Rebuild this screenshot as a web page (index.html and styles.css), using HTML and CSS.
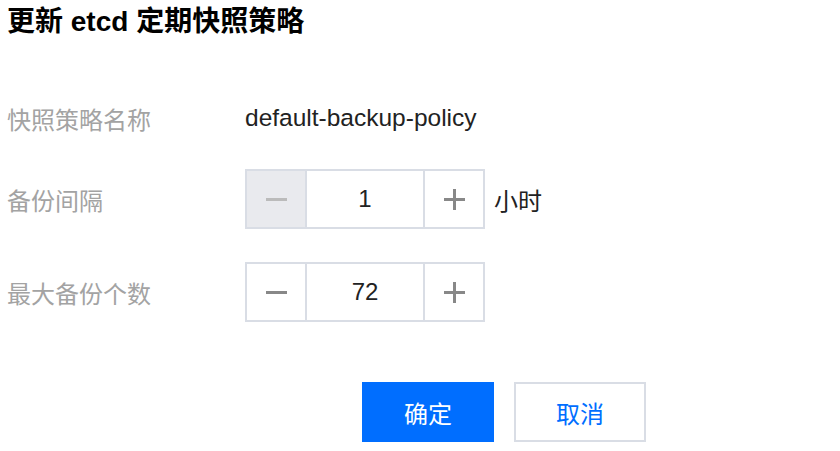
FILE: index.html
```html
<!DOCTYPE html>
<html lang="zh-CN">
<head>
    <meta charset="UTF-8">
    <meta name="viewport" content="width=device-width, initial-scale=1.0">
    <title>更新 etcd 定期快照策略</title>
    <link rel="stylesheet" href="styles.css">
</head>
<body>
    <div class="dialog">
        <h2 class="dialog-title">更新 etcd 定期快照策略</h2>

        <div class="form">
            <!-- 策略名称 -->
            <div class="form-row row-name">
                <label class="form-label">快照策略名称</label>
                <div class="form-value">default-backup-policy</div>
            </div>

            <!-- 备份间隔 -->
            <div class="form-row row-interval">
                <label class="form-label">备份间隔</label>
                <div class="stepper">
                    <button class="step-btn disabled" type="button"><span class="icon-minus"></span></button>
                    <input class="step-input" type="text" value="1">
                    <button class="step-btn" type="button"><span class="icon-plus"></span></button>
                </div>
                <span class="unit">小时</span>
            </div>

            <!-- 最大备份个数 -->
            <div class="form-row row-count">
                <label class="form-label">最大备份个数</label>
                <div class="stepper">
                    <button class="step-btn" type="button"><span class="icon-minus"></span></button>
                    <input class="step-input" type="text" value="72">
                    <button class="step-btn" type="button"><span class="icon-plus"></span></button>
                </div>
            </div>
        </div>

        <div class="dialog-footer">
            <button class="btn btn-primary" type="button">确定</button>
            <button class="btn btn-default" type="button">取消</button>
        </div>
    </div>
</body>
</html>
```

FILE: styles.css
```css
body {
    margin: 0;
    padding: 0;
    background: #fff;
    font-family: "Liberation Sans", "Noto Sans CJK SC", sans-serif;
    color: #222;
}
.dialog {
    padding: 7px 0 0 7px;
}
.dialog-title {
    margin: 0;
    font-size: 28px;
    line-height: 30px;
    font-weight: bold;
    color: #000;
}
.form {
    margin-top: 51px;
}
.form-row {
    display: flex;
    align-items: center;
    height: 60px;
}
.row-interval {
    margin-top: 21px;
}
.row-count {
    margin-top: 33px;
}
.form-label {
    width: 238px;
    font-size: 24px;
    color: #a3a3a3;
}
.form-value {
    font-size: 24.5px;
    color: #222;
}
.stepper {
    display: flex;
    height: 56px;
    border: 2px solid #d9dde5;
}
.step-btn {
    width: 58px;
    padding: 0;
    border: none;
    background: #fff;
    display: flex;
    justify-content: center;
    align-items: center;
    cursor: pointer;
}
.step-btn.disabled {
    background: #e9eaee;
    cursor: not-allowed;
}
.step-input {
    width: 116px;
    padding: 0;
    border: none;
    border-left: 2px solid #d9dde5;
    border-right: 2px solid #d9dde5;
    font-family: inherit;
    font-size: 24px;
    color: #222;
    text-align: center;
    outline: none;
}
.icon-minus,
.icon-plus {
    position: relative;
    display: block;
    width: 21px;
    height: 21px;
}
.icon-minus::before,
.icon-plus::before,
.icon-plus::after {
    content: "";
    position: absolute;
    background: #888;
}
.icon-minus::before,
.icon-plus::before {
    left: 0;
    right: 0;
    top: 9px;
    height: 3px;
}
.icon-plus::after {
    top: 0;
    bottom: 0;
    left: 9px;
    width: 3px;
}
.disabled .icon-minus::before {
    background: #bbb;
}
.unit {
    margin-left: 9px;
    font-size: 24px;
    color: #222;
}
.dialog-footer {
    display: flex;
    gap: 20px;
    margin: 60px 0 0 355px;
}
.btn {
    width: 132px;
    height: 60px;
    font-family: inherit;
    font-size: 24px;
    cursor: pointer;
}
.btn-primary {
    background: #006eff;
    border: none;
    color: #fff;
}
.btn-default {
    background: #fff;
    border: 2px solid #d9dde5;
    color: #006eff;
}
```
